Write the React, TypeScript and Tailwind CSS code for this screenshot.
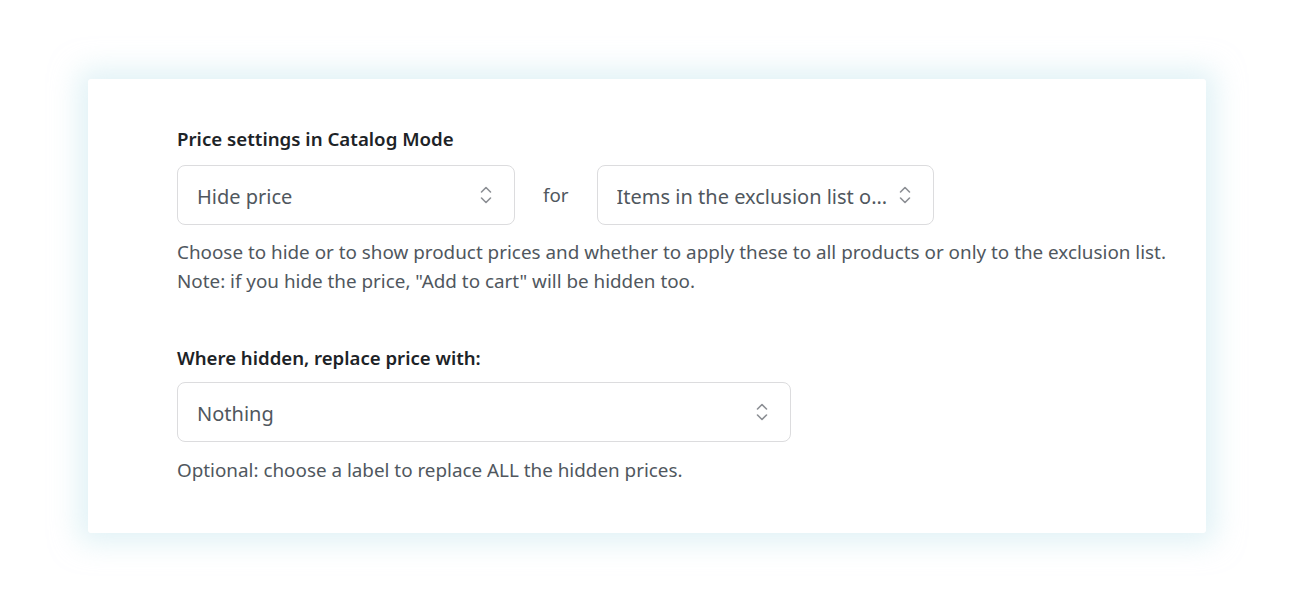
import React from "react";

function Chevrons() {
  return (
    <svg width="14" height="22" viewBox="0 0 14 22" fill="none" stroke="#8c8f94" strokeWidth="1.6" strokeLinecap="round" strokeLinejoin="round">
      <path d="M2.5 8 L7 3.5 L11.5 8" />
      <path d="M2.5 14 L7 18.5 L11.5 14" />
    </svg>
  );
}

function Select({ value, className }: { value: string; className: string }) {
  return (
    <div className={`flex items-center justify-between h-[60px] rounded-[8px] border border-[#dcdcde] bg-white pr-[21px] ${className}`}>
      <span className="pt-[3px] text-[20px] text-[#50575e] whitespace-nowrap overflow-hidden">{value}</span>
      <Chevrons />
    </div>
  );
}

export default function App() {
  return (
    <div className="w-[1300px] h-[613px] bg-white pt-[79px] pl-[88px]" style={{ fontFamily: '"Noto Sans", "Open Sans", sans-serif' }}>
      <div className="w-[1118px] h-[454px] bg-white rounded-[3px] shadow-[0_0_28px_10px_rgba(200,232,238,0.55)] pl-[89px] pt-[46px]">
        <div className="text-[18.7px] font-semibold text-[#1d2327] leading-[28px]">Price settings in Catalog Mode</div>
        <div className="flex items-center mt-[12px]">
          <Select value="Hide price" className="w-[338px] pl-[19px]" />
          <span className="text-[18.8px] text-[#50575e] mx-[28px]">for</span>
          <Select value="Items in the exclusion list o..." className="w-[337px] pl-[19px]" />
        </div>
        <div className="mt-[13px] text-[18.85px] leading-[29px] text-[#50575e]">
          <div>Choose to hide or to show product prices and whether to apply these to all products or only to the exclusion list.</div>
          <div>Note: if you hide the price, "Add to cart" will be hidden too.</div>
        </div>
        <div className="mt-[48px] text-[18.6px] font-semibold text-[#1d2327] leading-[28px]">Where hidden, replace price with:</div>
        <Select value="Nothing" className="w-[614px] mt-[10px] pl-[19px]" />
        <div className="mt-[14px] text-[18.85px] leading-[29px] text-[#50575e]">Optional: choose a label to replace ALL the hidden prices.</div>
      </div>
    </div>
  );
}
